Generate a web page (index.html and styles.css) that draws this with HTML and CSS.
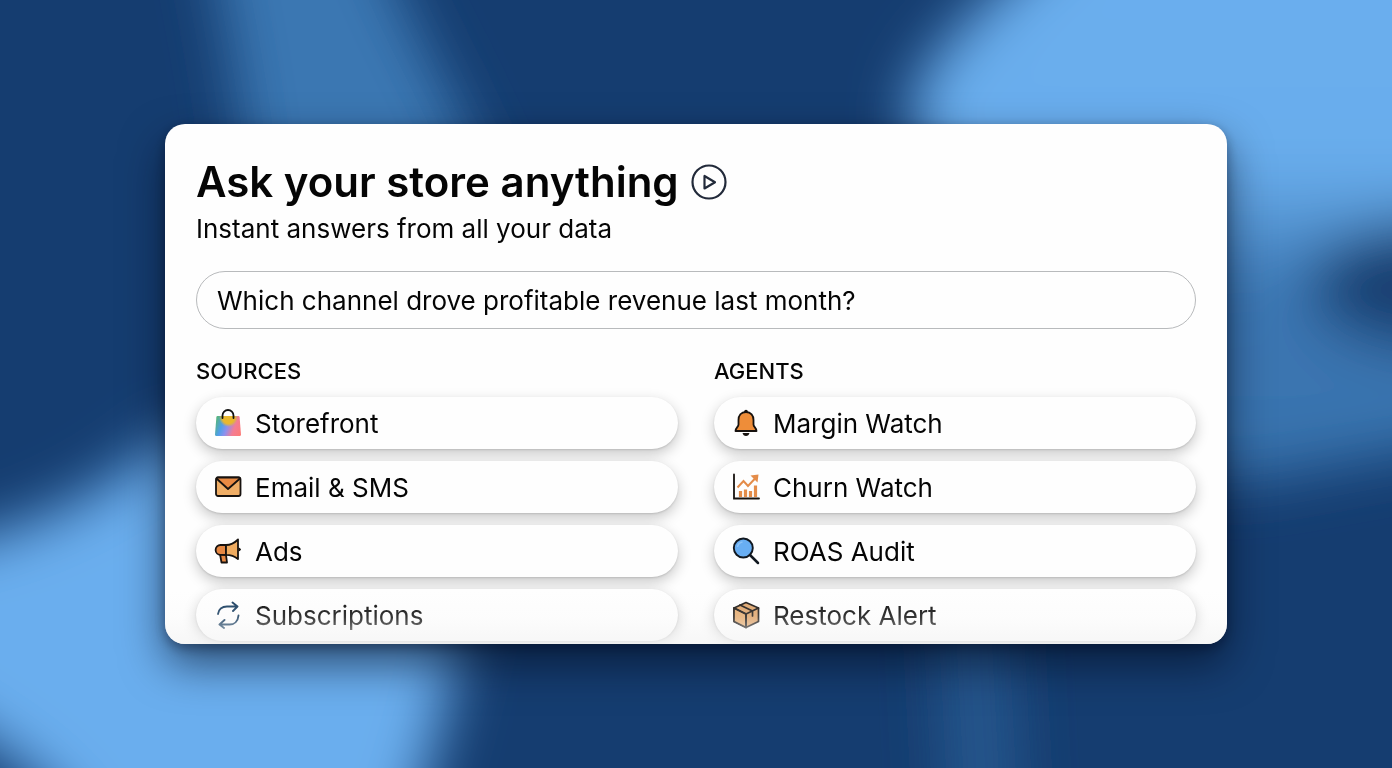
FILE: index.html
```html
<!DOCTYPE html>
<html lang="en">
<head>
<meta charset="utf-8">
<meta name="viewport" content="width=device-width, initial-scale=1">
<title>Ask your store anything</title>
<link rel="stylesheet" href="styles.css">
</head>
<body>
<svg class="backdrop" viewBox="0 0 1392 768" preserveAspectRatio="none" aria-hidden="true">
  <defs>
    <filter id="soft" x="-20%" y="-20%" width="140%" height="140%"><feGaussianBlur stdDeviation="29"/></filter>
    <linearGradient id="sky" x1="0" y1="0" x2="0" y2="1">
      <stop offset="0" stop-color="#6aaeee"/><stop offset=".44" stop-color="#69adec"/><stop offset=".66" stop-color="#3b77b3"/><stop offset="1" stop-color="#3871ac"/>
    </linearGradient>
  </defs>
  <rect width="1392" height="768" fill="#153d70"/>
  <g filter="url(#soft)">
    <path d="M195-80H370C400 10 430 50 465 130L560 330H260C255 200 240 90 205-80Z" fill="#3b77b2"/>
    <path d="M1080-80C990 0 910 60 910 115C960 280 1100 410 1160 480L1260 480L1480 440V-80Z" fill="url(#sky)"/>
    <path d="M1470 220C1400 220 1310 235 1310 285C1310 335 1400 350 1470 350Z" fill="#153d70"/>
    <path d="M-80 550C30 535 110 490 180 430L480 560C455 640 450 720 400 850H90C65 790 10 755-80 700Z" fill="#6aaeee"/>
    <path d="M935 560H1005L1020 850H950Z" fill="#27598f"/>
  </g>
</svg>
<main class="stage">
  <section class="card">
    <header class="intro">
      <div class="title-row">
        <h1 class="title">Ask your store anything</h1>
        <button class="play" type="button" aria-label="Play demo">
          <svg viewBox="0 0 36 36" fill="none" stroke="#222a3a" stroke-width="2.200" stroke-linejoin="round"><circle cx="18" cy="18" r="16.500"/><path d="M13.500 12v12.500l10.500-6.200z"/></svg>
        </button>
      </div>
      <p class="subtitle">Instant answers from all your data</p>
    </header>
    <input class="ask" type="text" aria-label="Ask a question" value="Which channel drove profitable revenue last month?">
    <div class="columns">
      <section class="column">
        <h2 class="label">SOURCES</h2>
        <button class="pill" type="button">
          <svg class="icon" viewBox="0 0 28 28">
            <defs>
              <linearGradient id="bag" x1="0" y1=".3" x2="1" y2=".6"><stop offset="0" stop-color="#58b86c"/><stop offset=".3" stop-color="#4f9fe8"/><stop offset=".5" stop-color="#8c90ee"/><stop offset=".75" stop-color="#f47c94"/><stop offset="1" stop-color="#fb7b79"/></linearGradient>
              <radialGradient id="sun"><stop offset=".65" stop-color="#e9b82e"/><stop offset="1" stop-color="#e9b82e" stop-opacity="0"/></radialGradient>
              <clipPath id="bagclip"><path d="M3.500 7h21q1 0 1.100 1l1.400 17.500q0 1.500-1.500 1.500h-23q-1.500 0-1.500-1.500L2.400 8q.1-1 1.100-1z"/></clipPath>
            </defs>
            <g clip-path="url(#bagclip)"><path d="M0 6h28v22H0z" fill="url(#bag)"/><circle cx="14.500" cy="8.500" r="9.500" fill="url(#sun)"/></g>
            <path d="M8.500 9V6.500a5.500 5.500 0 0 1 11 0V9" fill="none" stroke="#111" stroke-width="1.800" stroke-linecap="round"/>
          </svg>
          Storefront
        </button>
        <button class="pill" type="button">
          <svg class="icon" viewBox="0 0 28 28" stroke="#17120f" stroke-width="1.800" stroke-linejoin="round"><rect x="2" y="4.500" width="24.500" height="18.500" rx="2" fill="#f0ae66"/><path d="M2.500 5.500 14 16 26 5.500Q25.500 4.500 24.500 4.500h-20.500q-1 0-1.500 1z" fill="#e98a43"/></svg>
          Email &amp; SMS
        </button>
        <button class="pill" type="button">
          <svg class="icon" viewBox="0 0 28 28" stroke="#17120f" stroke-width="1.800" stroke-linejoin="round"><path d="m6 17 1.500 8.500h5.500L12 18z" fill="#e68843"/><path d="M12 8H6.500a4.800 4.800 0 0 0 0 9.800H12z" fill="#e68843"/><path d="M12 8c5 0 9-2.500 12-5.500V22c-3-2.500-7-4.200-12-4.200z" fill="#f0ac60"/><path d="M24.500 11.200q2 0 2 1.300t-2 1.300" fill="#17120f" stroke-width="1"/></svg>
          Ads
        </button>
        <button class="pill" type="button">
          <svg class="icon" viewBox="0 0 28 28" fill="none" stroke="#12385b" stroke-width="1.900" stroke-linecap="round" stroke-linejoin="round"><path d="M4 13C4.500 8.500 8 5.500 13 5.500h10M18.500 1.500 23.500 5.500l-4.500 4.500M24.500 14.500c-.5 5.500-4 9-9 9H6M10.500 19 5.500 23.500 10 27"/></svg>
          Subscriptions
        </button>
      </section>
      <section class="column">
        <h2 class="label">AGENTS</h2>
        <button class="pill" type="button">
          <svg class="icon" viewBox="0 0 28 28"><circle cx="14" cy="2.500" r="1.800" fill="#17120f"/><path d="M14 3C9 3 6.500 6.500 6.500 11v4.500C6.500 18 3.500 19 3.500 22h21c0-3-3-4-3-6.500V11C21.500 6.500 19 3 14 3z" fill="#ee8d39" stroke="#17120f" stroke-width="1.800" stroke-linejoin="round"/><path d="M10.500 24h7q-.8 3-3.500 3t-3.500-3z" fill="#17120f"/></svg>
          Margin Watch
        </button>
        <button class="pill" type="button">
          <svg class="icon" viewBox="0 0 28 28" fill="none"><path d="M2 1.500v24h25" stroke="#17120f" stroke-width="1.800" stroke-linecap="round"/><path d="M8.500 24v-6M13.500 24v-7.500M18.500 24v-6M23.500 24V12.500" stroke="#e48c49" stroke-width="3.200"/><path d="m5.500 14.500 6-6.500 4.500 5L24 4.500" stroke="#e48c49" stroke-width="2"/><path d="m18.500 2.500 8-1-1 8z" fill="#e48c49"/></svg>
          Churn Watch
        </button>
        <button class="pill" type="button">
          <svg class="icon" viewBox="0 0 28 28" stroke="#111820"><circle cx="11.300" cy="11" r="9.500" fill="#68aef3" stroke-width="1.900"/><path d="M5.500 10a6 6 0 0 1 5-5" fill="none" stroke="#8cc3f8" stroke-width="1.500"/><path d="m18 18 8 8" stroke-width="2.500" stroke-linecap="round"/></svg>
          ROAS Audit
        </button>
        <button class="pill" type="button">
          <svg class="icon" viewBox="0 0 28 28" stroke="#17120f" stroke-width="1.700" stroke-linejoin="round" stroke-linecap="round"><path d="M14 1.500 26.500 7v13.500L14 26.500 2 20.500V7z" fill="#dfa368"/><path d="M2 7l12 6v13.500L2 20.500z" fill="#e5aa6c"/><path d="m2 7 12 6 12.500-6M14 13v13.500M8 4l12.500 6v5" fill="none"/></svg>
          Restock Alert
        </button>
      </section>
    </div>
  </section>
</main>
</body>
</html>
```
FILE: styles.css
```css
* { box-sizing: border-box; }

body {
  margin: 0;
  background: #153d70;
  color: #050505;
  font-family: Inter, "Liberation Sans", sans-serif;
}

.backdrop {
  position: fixed;
  inset: 0;
  z-index: -1;
  width: 100%;
  height: 100%;
}

.stage {
  display: flex;
  align-items: center;
  min-height: 100vh;
  padding: 24px 165px;
}

.card {
  position: relative;
  flex: 1;
  padding: 35px 31px 3px;
  border-radius: 20px;
  overflow: hidden;
  background: #fefefe;
  box-shadow: 0 20px 44px rgba(0, 10, 30, 0.6), 0 4px 12px rgba(0, 10, 30, 0.35);
}

/* Fades the last row out towards the bottom edge */
.card::after {
  content: "";
  position: absolute;
  inset: auto 0 0;
  height: 54px;
  background: linear-gradient(rgba(248, 248, 248, 0), rgba(246, 246, 246, 0.2) 50%, rgba(245, 245, 245, 0.8));
  pointer-events: none;
}

.title-row {
  display: flex;
  align-items: center;
  gap: 12px;
}

.title {
  margin: 0;
  font-size: 42px;
  line-height: 46px;
  font-weight: 600;
}

.play {
  width: 36px;
  height: 36px;
  padding: 0;
  border: 0;
  background: none;
}

.play svg {
  display: block;
}

.subtitle {
  margin: 8px 0 0;
  font-size: 26px;
  line-height: 32px;
}

.ask {
  display: block;
  width: 100%;
  height: 58px;
  margin: 26px 0 0;
  padding: 0 20px;
  border: 1px solid #b8babc;
  border-radius: 30px;
  background: #fefefe;
  color: inherit;
  font: inherit;
  font-size: 26px;
}

.columns {
  display: grid;
  grid-template-columns: 1fr 1fr;
  gap: 36px;
  margin-top: 28px;
}

.column {
  display: flex;
  flex-direction: column;
  gap: 12px;
}

.label {
  margin: 0;
  font-size: 22px;
  line-height: 28px;
  font-weight: 500;
}

.pill {
  display: flex;
  align-items: center;
  gap: 13px;
  height: 52px;
  padding: 0 18px;
  border: 0;
  border-radius: 26px;
  background: #fefefe;
  box-shadow: 0 5px 14px rgba(0, 0, 0, 0.22), 0 1px 2px rgba(0, 0, 0, 0.12);
  color: inherit;
  font: inherit;
  font-size: 26px;
  text-align: left;
}

.icon {
  flex: none;
  width: 28px;
  height: 28px;
}
```
